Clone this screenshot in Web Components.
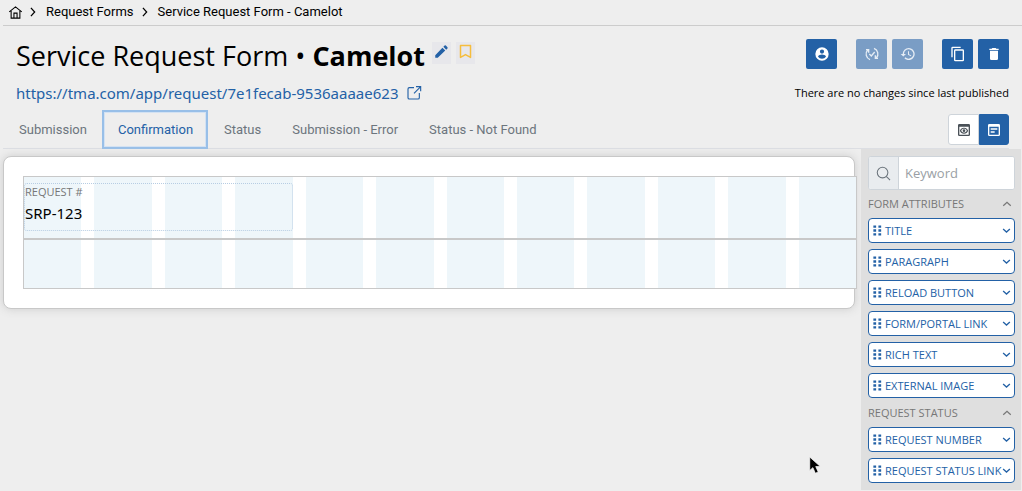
<!DOCTYPE html>
<html lang="en">
<head>
<meta charset="utf-8">
<title>Service Request Form - Camelot</title>
<style>
body{margin:0;background:#eee;color:#000;font-family:"Open Sans","Noto Sans",sans-serif;font-size:12px}
</style>
</head>
<body>
<request-form-page></request-form-page>
<script>
const ICONS = {
  home:'<path d="M2 11 12 3l10 8M5 9.500V21h14V9.500M9.500 21v-8h5v8" fill="none" stroke="currentColor" stroke-width="1.700"/>',
  right:'<path d="m7 2 9 10-9 10" fill="none" stroke="currentColor" stroke-width="3"/>',
  down:'<path d="m3 8 9 8 9-8" fill="none" stroke="currentColor" stroke-width="3.500"/>',
  up:'<path d="m3 16 9-8 9 8" fill="none" stroke="currentColor" stroke-width="3"/>',
  pencil:'<path d="M2 18v4h4L18 10.500 13.500 6zM21.500 7a1.500 1.500 0 0 0 0-2l-2.500-2.500a1.500 1.500 0 0 0-2 0l-2 2L19.500 9z" fill="currentColor"/>',
  bookmark:'<path d="M4 2.500h16v19L12 17l-8 4.500z" fill="none" stroke="currentColor" stroke-width="2.400" stroke-linejoin="round"/>',
  external:'<path d="M12 4H5a2 2 0 0 0-2 2v13a2 2 0 0 0 2 2h13a2 2 0 0 0 2-2v-7M15 2.500h7v7M22 2.500 12 12.500" fill="none" stroke="currentColor" stroke-width="1.700"/>',
  user:'<path fill="currentColor" fill-rule="evenodd" d="M12 2a10 10 0 1 0 0 20 10 10 0 0 0 0-20zm0 3.200a3.200 3.200 0 1 1 0 6.400 3.200 3.200 0 0 1 0-6.400zm0 14a7.200 7.200 0 0 1-6-3.200c0-2 4-3.100 6-3.100s6 1.100 6 3.100a7.200 7.200 0 0 1-6 3.200z"/>',
  sync:'<path d="M9 20.500A9 9 0 0 1 5.500 6M3 5.500h4V10M15 3.500A9 9 0 0 1 18.500 18M21 18.500h-4V14M8 12l3 3 5-6" fill="none" stroke="currentColor" stroke-width="2"/>',
  history:'<path fill="currentColor" d="M13 3a9 9 0 0 0-9 9H1l3.900 3.900L9 12H6a7 7 0 1 1 2.060 4.940l-1.420 1.420A9 9 0 1 0 13 3zm-1 5v5l4.280 2.540.720-1.210-3.500-2.080V8z"/>',
  copy:'<path fill="currentColor" d="M16 1H4a2 2 0 0 0-2 2v14h2V3h12zm3 4H8a2 2 0 0 0-2 2v14a2 2 0 0 0 2 2h11a2 2 0 0 0 2-2V7a2 2 0 0 0-2-2zm0 16H8V7h11z"/>',
  trash:'<path fill="currentColor" d="M6 19a2 2 0 0 0 2 2h8a2 2 0 0 0 2-2V7H6zM19 4h-3.500l-1-1h-5l-1 1H5v2h14z"/>',
  preview:'<path fill="currentColor" fill-rule="evenodd" d="M5 3h14a2 2 0 0 1 2 2v14a2 2 0 0 1-2 2H5a2 2 0 0 1-2-2V5a2 2 0 0 1 2-2zm0 4v12h14V7zm7 1.500c3 0 5.200 1.800 6.200 4.500-1 2.700-3.200 4.500-6.200 4.500S6.800 15.700 5.800 13c1-2.700 3.200-4.500 6.200-4.500zm0 1.800c-2 0-3.400 1-4.200 2.700.8 1.700 2.200 2.700 4.200 2.700s3.400-1 4.200-2.700c-.8-1.700-2.200-2.700-4.200-2.700zm0 .7a2 2 0 1 1 0 4 2 2 0 0 1 0-4z"/>',
  design:'<path fill="currentColor" fill-rule="evenodd" d="M5 3h14a2 2 0 0 1 2 2v14a2 2 0 0 1-2 2H5a2 2 0 0 1-2-2V5a2 2 0 0 1 2-2zm0 4v12h14V7zm2 2.500h10v2H7zm0 4.500h6v2H7z"/>',
  search:'<path d="M10.500 2a8.500 8.500 0 1 0 0 17 8.500 8.500 0 0 0 0-17zM16.500 16.500l6 6" fill="none" stroke="currentColor" stroke-width="1.700"/>',
  grip:'<path fill="currentColor" d="M3 1h6v5H3zM14 1h6v5h-6zM3 9.500h6v5H3zM14 9.500h6v5h-6zM3 18h6v5H3zM14 18h6v5h-6z"/>',
  cursor:'<path d="M1 0v19l4.500-4 3.500 8 4-2-3.500-7.500H16z" fill="#000" stroke="#fff" stroke-width="1"/>'
};
function define(name, template, after){
  const t = document.createElement('template');
  t.innerHTML = template;
  customElements.define(name, class extends HTMLElement{
    connectedCallback(){
      if(this.shadowRoot) return;
      this.attachShadow({mode:'open'}).append(t.content.cloneNode(true));
      if(after) after(this, this.shadowRoot);
    }
  });
}
define('ui-icon', `<style>:host{display:inline-block;flex:none;width:var(--size,16px);height:var(--size,16px)}svg{display:block;width:100%;height:100%}</style><svg viewBox="0 0 24 24" aria-hidden="true"></svg>`,
  (h,r)=>{ r.querySelector('svg').innerHTML = ICONS[h.getAttribute('name')]; });

define('bread-crumbs', `<style>
:host{display:block;margin-left:3px;border-bottom:1px solid #ccc}
nav{display:flex;align-items:center;height:25px;padding:0 5px 1px;font:13px/22px Roboto,sans-serif;box-sizing:border-box}
a{color:#000;text-decoration:none}
.home{display:flex;margin-right:5px;--size:15px}
.sep{--size:10px;margin-right:8px}
.forms{margin-right:6px}
</style>
<nav aria-label="Breadcrumb"><a class="home" href="#home" aria-label="Home"><ui-icon name="home"></ui-icon></a><ui-icon class="sep" name="right"></ui-icon><a class="forms" href="#forms">Request Forms</a><ui-icon class="sep" name="right"></ui-icon><a href="#form">Service Request Form - Camelot</a></nav>`);

define('tool-button', `<style>
:host{display:block;--size:16px}
button{display:flex;align-items:center;justify-content:center;width:31px;height:30px;padding:0;border:0;border-radius:2px;background:#2361a6;color:#fff}
button:disabled{background:#7a9dc5;color:#e6edf5}
</style><button type="button"></button>`, (h,r)=>{
  const b=r.querySelector('button');
  b.disabled=h.hasAttribute('disabled');
  b.setAttribute('aria-label',h.getAttribute('label'));
  const i=document.createElement('ui-icon'); i.setAttribute('name',h.getAttribute('icon'));
  b.append(i);
});

define('form-header', `<style>
:host{display:flex;justify-content:space-between;padding:13px 13px 0 16px}
h1{display:flex;align-items:flex-start;margin:0;font-size:27px;line-height:34px;font-weight:400;white-space:pre}
h1 b{font-weight:700}
h1 button{display:flex;align-items:flex-start;justify-content:center;box-sizing:border-box;width:19px;height:22px;padding:2px 0 0;margin:3px 0 0 5px;border:0;background:#e7e7eb}
h1 .edit{margin-left:7px;color:#2361a6;--size:15px}.mark{color:#f5bd3d;--size:15px}
.url{display:flex;align-items:center;gap:8px;margin-top:9px;font:15px/22px "Noto Sans",sans-serif;color:#2361a6;text-decoration:none}
.url ui-icon{--size:16px}
.side{display:flex;flex-direction:column;align-items:flex-end}
.tools{display:flex;gap:5px}
.gap{margin-left:14px}
p{margin:16px 0 0;font-size:11px;line-height:16px}
</style>
<div><h1><span>Service Request Form • <b>Camelot</b></span><button class="edit" aria-label="Edit name"><ui-icon name="pencil"></ui-icon></button><button class="mark" aria-label="Bookmark"><ui-icon name="bookmark"></ui-icon></button></h1>
<a class="url" href="https://tma.com/app/request/7e1fecab-9536aaaae623">https://tma.com/app/request/7e1fecab-9536aaaae623<ui-icon name="external"></ui-icon></a></div>
<div class="side"><div class="tools"><tool-button icon="user" label="Owner"></tool-button><tool-button class="gap" icon="sync" label="Publish" disabled></tool-button><tool-button icon="history" label="History" disabled></tool-button><tool-button class="gap" icon="copy" label="Copy"></tool-button><tool-button icon="trash" label="Delete"></tool-button></div>
<p>There are no changes since last published</p></div>`);

define('form-tabs', `<style>
:host{display:flex;justify-content:space-between;margin:6px 13px 0 3px;border-bottom:1px solid #dcdee3}
.tabs{display:flex}
.tabs button{height:38px;padding:1px 15px 0 16px;border:0;background:none;color:#6c757d;font:13px/20px Roboto,sans-serif}
.tabs button[aria-selected=true]{color:#2361a6;box-shadow:inset 0 0 0 2px #98bfe8,inset 0 0 0 3px #d3e2f3;margin-bottom:-1px;padding-bottom:1px;height:39px}
.view{display:flex;align-self:flex-start;margin-top:4px;--size:16px}
.view button{display:flex;align-items:center;justify-content:center;box-sizing:border-box;width:31px;height:31px;padding:0;border:1px solid #ced4da;border-radius:3px 0 0 3px;background:#fff;color:#495057}
.view .on{width:30px;border-color:#2361a6;border-radius:0 3px 3px 0;background:#2361a6;color:#fff}
</style>
<div class="tabs" role="tablist"><button role="tab">Submission</button><button role="tab" aria-selected="true">Confirmation</button><button role="tab">Status</button><button role="tab">Submission - Error</button><button role="tab">Status - Not Found</button></div>
<div class="view"><button aria-label="Preview"><ui-icon name="preview"></ui-icon></button><button class="on" aria-label="Design"><ui-icon name="design"></ui-icon></button></div>`);

define('grid-row', `<style>
:host{display:grid;grid-template-columns:repeat(12,1fr);column-gap:13px;box-sizing:border-box;border:1px solid #c8c8c8;min-height:50px}
i{grid-row:1;background:#eef6fa}
slot{display:contents}
</style>${Array.from({length:12},(_,n)=>`<i style="grid-column:${n+1}"></i>`).join('')}<slot></slot>`);

define('form-field', `<style>
:host{display:block;grid-column:1/span 4;grid-row:1;margin:6px 0 7px;box-sizing:border-box;border:1px dotted #b7cde3;border-radius:3px}
dl{margin:0}dt{font-size:11px;line-height:16px;color:#777}dd{margin:3px 0 7px;font:15px/20px "Noto Sans",sans-serif}
</style><dl><dt><slot name="label"></slot></dt><dd><slot></slot></dd></dl>`);

define('form-canvas', `<style>
:host{display:block;border:1px solid #c8c8c8;border-radius:8px;background:#fff;box-shadow:0 0 10px #ccc;padding:19px 0 19px 19px}
div{margin-right:-3px}
</style><div><grid-row><form-field><span slot="label">REQUEST #</span>SRP-123</form-field></grid-row><grid-row></grid-row></div>`);

define('search-box', `<style>
:host{display:block}
label{display:flex;box-sizing:border-box;height:34px;border:1px solid #ced4da;border-radius:3px;overflow:hidden;background:#fff}
span{display:flex;align-items:center;justify-content:center;width:29px;flex:none;background:#e9ecef;border-right:1px solid #ced4da;color:#6c757d;--size:15px}
input{flex:1;min-width:0;padding:0 6px;border:0;outline:0;font:13px/20px "Open Sans","Noto Sans",sans-serif}
input::placeholder{color:#9a9fa5}
</style><label><span><ui-icon name="search"></ui-icon></span><input type="search" placeholder="Keyword" aria-label="Keyword"></label>`);

define('palette-item', `<style>
:host{display:block}
button{display:flex;align-items:center;box-sizing:border-box;width:100%;height:25px;padding:0 3px;border:1px solid #2361a6;border-radius:4px;background:#fff;color:#2361a6;font:11px/16px "Open Sans","Noto Sans",sans-serif;white-space:nowrap;text-align:left}
.grip{--size:11px;margin-right:2px}.down{--size:9px;margin-left:auto}
</style><button type="button"><ui-icon class="grip" name="grip"></ui-icon><slot></slot><ui-icon class="down" name="down"></ui-icon></button>`);

define('palette-group', `<style>
:host{display:block}
h2{margin:0;font:inherit}
h2 button{display:flex;align-items:center;justify-content:space-between;width:100%;height:28px;padding:0 3px 0 0;border:0;background:none;color:#777;font:11px/16px "Open Sans","Noto Sans",sans-serif;--size:10px}
.items{display:grid;grid-template-columns:minmax(0,1fr);gap:6px;padding-bottom:1px}
</style><h2><button type="button" aria-expanded="true"><slot name="title"></slot><ui-icon name="up"></ui-icon></button></h2><div class="items"><slot></slot></div>`);

define('component-palette', `<style>
:host{display:block;padding:7px 6px 6px 7px;background:#dfdfdf}
</style><search-box></search-box>
<palette-group><span slot="title">FORM ATTRIBUTES</span><palette-item>TITLE</palette-item><palette-item>PARAGRAPH</palette-item><palette-item>RELOAD BUTTON</palette-item><palette-item>FORM/PORTAL LINK</palette-item><palette-item>RICH TEXT</palette-item><palette-item>EXTERNAL IMAGE</palette-item></palette-group>
<palette-group><span slot="title">REQUEST STATUS</span><palette-item>REQUEST NUMBER</palette-item><palette-item>REQUEST STATUS LINK</palette-item></palette-group>`);

define('request-form-page', `<style>
:host{display:block;position:relative}
main{display:grid;grid-template-columns:1fr 161px;align-items:start}
form-canvas{margin:7px 6px 0 3px}
component-palette{margin-right:1px}
.cursor{position:absolute;left:809px;top:457px;--size:17px}
</style><bread-crumbs></bread-crumbs><form-header></form-header><form-tabs></form-tabs>
<main><form-canvas></form-canvas><component-palette></component-palette></main><ui-icon class="cursor" name="cursor"></ui-icon>`);
</script>
</body>
</html>
